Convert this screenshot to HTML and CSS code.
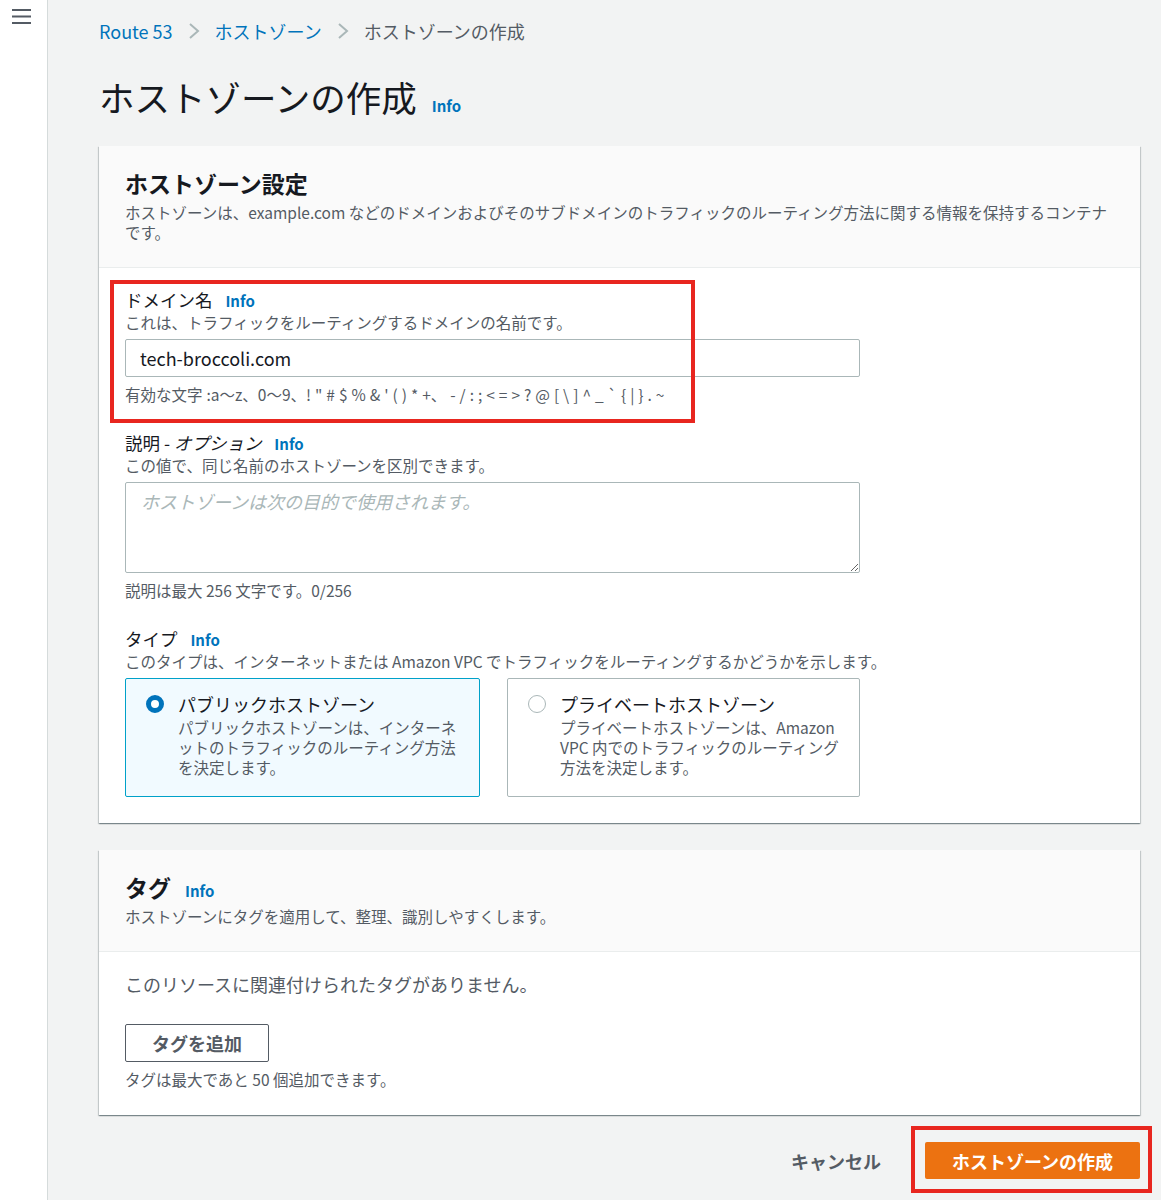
FILE: index.html
```html
<!DOCTYPE html>
<html lang="ja">
<head>
    <meta charset="utf-8">
    <meta name="viewport" content="width=device-width, initial-scale=1.0">
    <title>ホストゾーンの作成 | Route 53</title>
    <link rel="stylesheet" href="styles.css">
</head>
<body>
    <div class="app">
        <nav class="sidebar">
            <button class="menu-btn" aria-label="メニュー">
                <svg width="19" height="16" viewBox="0 0 19 16">
                    <path d="M0 2h19M0 8.5h19M0 15h19" stroke="#545b64" stroke-width="2.2" fill="none"/>
                </svg>
            </button>
        </nav>

        <main class="content">
            <div class="breadcrumbs">
                <a href="#">Route 53</a>
                <svg class="chev" width="12" height="18" viewBox="0 0 12 18"><path d="M2 2l8 7-8 7" stroke="#aab7b8" stroke-width="2" fill="none"/></svg>
                <a href="#">ホストゾーン</a>
                <svg class="chev" width="12" height="18" viewBox="0 0 12 18"><path d="M2 2l8 7-8 7" stroke="#aab7b8" stroke-width="2" fill="none"/></svg>
                <span class="current">ホストゾーンの作成</span>
            </div>

            <h1 class="page-title"><span>ホストゾーンの作成</span><a href="#" class="info">Info</a></h1>

            <section class="panel">
                <header class="panel-header">
                    <h2>ホストゾーン設定</h2>
                    <p>ホストゾーンは、example.com などのドメインおよびそのサブドメインのトラフィックのルーティング方法に関する情報を保持するコンテナです。</p>
                </header>
                <div class="panel-body">
                    <div class="field">
                        <label class="field-label">ドメイン名 <a href="#" class="info">Info</a></label>
                        <div class="field-desc">これは、トラフィックをルーティングするドメインの名前です。</div>
                        <input class="text-input" type="text" value="tech-broccoli.com">
                        <div class="field-hint charset">有効な文字 :a〜z、0〜9、! " # $ % &amp; ' ( ) * +、 - / : ; &lt; = &gt; ? @ [ \ ] ^ _ ` { | } . ~</div>
                        <span class="mark mark-domain"></span>
                    </div>

                    <div class="field">
                        <label class="field-label">説明 - <i>オプション</i> <a href="#" class="info">Info</a></label>
                        <div class="field-desc">この値で、同じ名前のホストゾーンを区別できます。</div>
                        <textarea class="text-area" placeholder="ホストゾーンは次の目的で使用されます。"></textarea>
                        <div class="field-hint">説明は最大 256 文字です。0/256</div>
                    </div>

                    <div class="field">
                        <label class="field-label">タイプ <a href="#" class="info">Info</a></label>
                        <div class="field-desc">このタイプは、インターネットまたは Amazon VPC でトラフィックをルーティングするかどうかを示します。</div>
                        <div class="tiles">
                            <label class="tile selected">
                                <span class="radio checked"></span>
                                <span class="tile-text">
                                    <span class="tile-title">パブリックホストゾーン</span>
                                    <span class="tile-desc">パブリックホストゾーンは、インターネットのトラフィックのルーティング方法を決定します。</span>
                                </span>
                            </label>
                            <label class="tile">
                                <span class="radio"></span>
                                <span class="tile-text">
                                    <span class="tile-title">プライベートホストゾーン</span>
                                    <span class="tile-desc">プライベートホストゾーンは、Amazon VPC 内でのトラフィックのルーティング方法を決定します。</span>
                                </span>
                            </label>
                        </div>
                    </div>
                </div>
            </section>

            <section class="panel">
                <header class="panel-header">
                    <h2><span>タグ</span><a href="#" class="info">Info</a></h2>
                    <p>ホストゾーンにタグを適用して、整理、識別しやすくします。</p>
                </header>
                <div class="panel-body">
                    <div class="empty-text">このリソースに関連付けられたタグがありません。</div>
                    <button class="btn-normal">タグを追加</button>
                    <div class="field-hint">タグは最大であと 50 個追加できます。</div>
                </div>
            </section>

            <div class="actions">
                <button class="btn-link">キャンセル</button>
                <div class="primary-wrap">
                    <button class="btn-primary">ホストゾーンの作成</button>
                    <span class="mark mark-primary"></span>
                </div>
            </div>
        </main>
    </div>
</body>
</html>
```

FILE: styles.css
```css
body {
    margin: 0;
    background: #f2f3f3;
    color: #16191f;
    font-family: "Noto Sans CJK JP", "Noto Sans", sans-serif;
}

a {
    text-decoration: none;
}

.app {
    display: flex;
    min-height: 100vh;
}

.sidebar {
    width: 47px;
    flex-shrink: 0;
    background: #fff;
    border-right: 1px solid #d5dbdb;
}

.menu-btn {
    display: block;
    margin: 8px 0 0 12px;
    padding: 0;
    border: none;
    background: none;
}

.content {
    flex: 1;
    padding: 19px 21px 20px 51px;
}

/* パンくず */
.breadcrumbs {
    display: flex;
    align-items: center;
    gap: 15px;
    font-size: 18px;
    line-height: 24px;
}

.breadcrumbs a {
    color: #0073bb;
}

.breadcrumbs .current {
    color: #545b64;
}

.page-title {
    display: flex;
    align-items: baseline;
    gap: 15px;
    margin: 32px 0 27px;
    font-size: 35.5px;
    line-height: 44px;
    font-weight: 400;
}

.info {
    color: #0073bb;
    font-size: 15px;
    font-weight: 700;
    line-height: 1;
    margin-left: 9px;
}

.page-title .info,
.panel-header h2 .info {
    margin-left: 0;
}

/* パネル */
.panel {
    background: #fff;
    box-shadow: 0 1px 1px 0 rgba(0,28,36,.3), 1px 1px 1px 0 rgba(0,28,36,.15), -1px 1px 1px 0 rgba(0,28,36,.15);
    margin-bottom: 27px;
}

.panel-header {
    background: #fafafa;
    border-bottom: 1px solid #eaeded;
    padding: 22px 26px 25px;
}

.panel-header h2 {
    display: flex;
    align-items: baseline;
    gap: 14px;
    margin: 0 0 4px;
    font-size: 23px;
    line-height: 30px;
    font-weight: 700;
}

.panel-header p {
    margin: 0;
    font-size: 15.5px;
    line-height: 20px;
    color: #545b64;
}

.panel-body {
    padding: 20px 26px 26px;
    display: flex;
    flex-direction: column;
    align-items: flex-start;
}

.field {
    position: relative;
    align-self: stretch;
    margin-bottom: 27px;
}

.field:last-child {
    margin-bottom: 0;
}

.field-label {
    display: block;
    font-size: 17.5px;
    line-height: 24px;
}

.field-desc {
    font-size: 15.5px;
    line-height: 20px;
    color: #545b64;
}

.field-hint {
    margin-top: 7px;
    font-size: 15.5px;
    line-height: 20px;
    color: #545b64;
}

.field-hint.charset {
    word-spacing: 0.5px;
}

.text-input,
.text-area {
    display: block;
    box-sizing: border-box;
    width: 735px;
    margin-top: 7px;
    border: 1px solid #aab7b8;
    border-radius: 2px;
    background: #fff;
    font-family: inherit;
    color: #16191f;
}

.text-input {
    height: 38px;
    padding: 0 14px;
    font-size: 18px;
}

.text-area {
    height: 91px;
    padding: 6px 15px;
    font-size: 18px;
    line-height: 24px;
}

.text-area::placeholder {
    color: #aab7b8;
    font-style: italic;
}

/* タイプ選択 */
.tiles {
    display: grid;
    grid-template-columns: 355px 353px;
    gap: 27px;
    margin-top: 7px;
}

.tile {
    display: flex;
    gap: 14px;
    padding: 13px 20px 19px 20px;
    border: 1px solid #aab7b8;
    border-radius: 2px;
    background: #fff;
}

.tile.selected {
    border-color: #00a1c9;
    background: #f1faff;
}

.radio {
    flex-shrink: 0;
    box-sizing: border-box;
    width: 18px;
    height: 18px;
    margin-top: 3px;
    border: 1px solid #aab7b8;
    border-radius: 50%;
    background: #fff;
}

.radio.checked {
    border: 5px solid #0073bb;
}

.tile-text {
    display: flex;
    flex-direction: column;
}

.tile-title {
    font-size: 18px;
    line-height: 24px;
}

.tile-desc {
    margin-top: 1px;
    font-size: 15.5px;
    line-height: 20px;
    color: #545b64;
}

/* タグ */
.empty-text {
    font-size: 18px;
    line-height: 24px;
    color: #545b64;
}

.btn-normal {
    margin-top: 28px;
    height: 38px;
    padding: 0 26px;
    border: 1px solid #545b64;
    border-radius: 2px;
    background: #fff;
    color: #545b64;
    font-family: inherit;
    font-size: 18px;
    font-weight: 700;
}

/* フッター */
.actions {
    display: flex;
    justify-content: flex-end;
    align-items: center;
    gap: 24px;
}

.btn-link {
    padding: 4px 20px;
    border: none;
    background: none;
    color: #545b64;
    font-family: inherit;
    font-size: 18px;
    font-weight: 700;
}

.primary-wrap {
    position: relative;
}

.btn-primary {
    display: block;
    height: 37px;
    padding: 0 27px;
    border: none;
    border-radius: 2px;
    background: #ec7211;
    color: #fff;
    font-family: inherit;
    font-size: 18px;
    font-weight: 700;
}

/* 赤枠の注釈 */
.mark {
    position: absolute;
    border: 4px solid #e8261f;
    pointer-events: none;
}

.mark-domain {
    left: -15px;
    top: -8px;
    width: 577px;
    height: 135px;
}

.mark-primary {
    left: -14px;
    top: -16px;
    right: -12px;
    bottom: -14px;
}
```
